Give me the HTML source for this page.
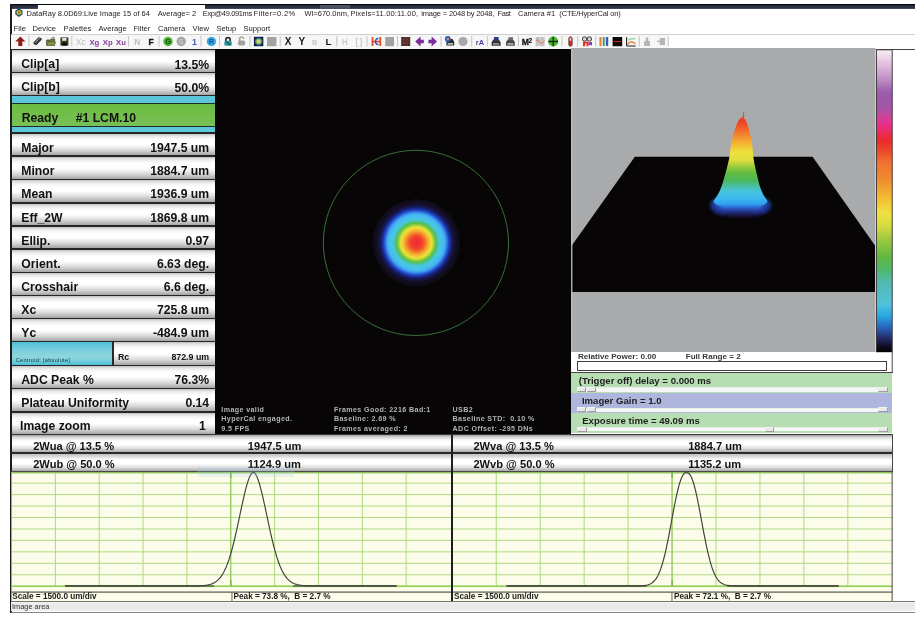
<!DOCTYPE html>
<html>
<head>
<meta charset="utf-8">
<title>DataRay</title>
<style>
html,body{margin:0;padding:0;}
body{width:915px;height:621px;background:#fff;overflow:hidden;position:relative;font-family:"Liberation Sans",sans-serif;color:#111;}
.abs{position:absolute;}
#leftpanel,#profiles,#controls,#imagearea,#hdr,#toolbar,#status{will-change:transform;}
/* window chrome */
#topline{left:10px;top:4px;width:905px;height:1px;background:#05070a;}
.navy{top:5px;height:3.6px;background:linear-gradient(#1e2836,#2c3646 65%,#4a5362);}
#leftborder{left:10.1px;top:4px;width:1.7px;height:609px;background:#1c1c1c;}
.ttl{top:7.6px;font-size:7.51px;line-height:11px;white-space:pre;color:#1e1e1e;}
.menu{top:22.8px;font-size:7.65px;line-height:11px;color:#1e1e1e;}
#menuline{left:11px;top:34px;width:904px;height:1px;background:#cfcfcf;}
/* left panel rows */
.row{left:11.4px;width:203.6px;height:21.7px;background:linear-gradient(to bottom,#c0c0c0 0%,#e6e6e6 10%,#f8f8f8 22%,#ffffff 34%,#ffffff 50%,#f0f0f0 62%,#d2d2d2 80%,#a4a4a4 100%);border-bottom:1.5px solid #262626;font-weight:bold;font-size:12px;}
.row .l{position:absolute;left:9.6px;bottom:2.2px;line-height:14px;white-space:nowrap;}
.row .v{position:absolute;right:6px;bottom:2.2px;line-height:14px;white-space:nowrap;}
.cy{left:11.4px;width:203.6px;background:#5cc6da;border-bottom:1.3px solid #1e2c30;}
/* bars */
.bar{height:18.4px;background:linear-gradient(to bottom,#b4b4b4 0%,#f2f2f2 16%,#ffffff 30%,#ffffff 58%,#d6d6d6 80%,#9a9a9a 100%);border-bottom:1.4px solid #2a2a2a;font-weight:bold;font-size:10.6px;}
.bar span{position:absolute;bottom:1.2px;line-height:13px;white-space:nowrap;}
.ovl{color:#b4b4b4;font-size:7.1px;letter-spacing:0.4px;font-weight:bold;line-height:9.6px;white-space:pre;}
.sl{left:571px;width:321.5px;font-weight:bold;font-size:8.4px;}
.sl span{position:absolute;left:7px;top:2px;line-height:10px;white-space:nowrap;color:#1a1a1a;}
.trk{position:absolute;left:5px;right:4px;bottom:2.2px;height:3.2px;background:#f4f4f4;border-top:1px solid #9a9a9a;}
.th{position:absolute;bottom:1.6px;height:4.4px;background:#ececec;border:0.8px solid #8a8a8a;box-sizing:border-box;}

.scale{font-size:8.2px;font-weight:bold;line-height:9px;white-space:pre;color:#1c1c1c;}
</style>
</head>
<body>
<!-- window frame -->
<div class="abs" id="topline"></div>
<div class="abs navy" style="left:10px;width:28px;"></div>
<div class="abs navy" style="left:205px;width:710px;"></div>
<div class="abs" style="left:320px;top:5.4px;width:30px;height:3.2px;background:#4a5362;"></div>
<div class="abs" id="leftborder"></div>

<div id="hdr">
<!-- title -->
<svg class="abs" style="left:14.1px;top:8.4px" width="9.8" height="9.4" viewBox="0 0 12 12">
<path d="M6 0.4 L10.6 3.4 L10.6 8 L6 11.4 L1.4 8 L1.4 3.4 Z" fill="#27357e"/>
<circle cx="6" cy="5.8" r="3.6" fill="#3f9a3a"/>
<circle cx="6" cy="5.8" r="2.7" fill="#d7d92e"/>
<circle cx="6" cy="5.8" r="1.6" fill="#e8464e"/>
</svg>
<div class="abs ttl" style="left:26.5px">DataRay 8.0D69:Live Image 15 of 64</div><div class="abs ttl" style="left:157.7px">Average= 2</div><div class="abs ttl" style="left:202.8px;letter-spacing:-0.37px">Exp@49.091ms</div><div class="abs ttl" style="left:253.5px;letter-spacing:0.35px">Filter=0.2%</div><div class="abs ttl" style="left:304.6px">Wl=670.0nm,</div><div class="abs ttl" style="left:350.4px;letter-spacing:0.15px">Pixels=11.00:11.00,</div><div class="abs ttl" style="left:421.3px;letter-spacing:-0.17px">image = 2048 by 2048,</div><div class="abs ttl" style="left:497.5px;letter-spacing:-0.4px">Fast</div><div class="abs ttl" style="left:518px">Camera #1</div><div class="abs ttl" style="left:559.3px;letter-spacing:-0.14px">(CTE/HyperCal on)</div>

<!-- menu -->
<div class="abs menu" style="left:13.6px">File</div>
<div class="abs menu" style="left:32.6px">Device</div>
<div class="abs menu" style="left:63.6px">Palettes</div>
<div class="abs menu" style="left:98.4px">Average</div>
<div class="abs menu" style="left:133.4px">Filter</div>
<div class="abs menu" style="left:158px">Camera</div>
<div class="abs menu" style="left:192.6px">View</div>
<div class="abs menu" style="left:216.4px">Setup</div>
<div class="abs menu" style="left:243.4px">Support</div>
<div class="abs" id="menuline"></div>
</div>


<div id="toolbar">
<div class="abs" style="left:11.4px;top:35px;width:657px;height:13.6px;background:#f6f6f6;"></div>
<svg class="abs" style="left:11px;top:35px" width="660" height="14" viewBox="11 35 660 14" font-family="Liberation Sans, sans-serif" font-weight="bold">
<rect x="28.4" y="36" width="1" height="10.4" fill="#c4c4c4"/>
<rect x="71.3" y="36" width="1" height="10.4" fill="#c4c4c4"/>
<rect x="128.0" y="36" width="1" height="10.4" fill="#c4c4c4"/>
<rect x="158.5" y="36" width="1" height="10.4" fill="#c4c4c4"/>
<rect x="200.5" y="36" width="1" height="10.4" fill="#c4c4c4"/>
<rect x="219.0" y="36" width="1" height="10.4" fill="#c4c4c4"/>
<rect x="249.5" y="36" width="1" height="10.4" fill="#c4c4c4"/>
<rect x="279.7" y="36" width="1" height="10.4" fill="#c4c4c4"/>
<rect x="336.3" y="36" width="1" height="10.4" fill="#c4c4c4"/>
<rect x="366.5" y="36" width="1" height="10.4" fill="#c4c4c4"/>
<rect x="397.0" y="36" width="1" height="10.4" fill="#c4c4c4"/>
<rect x="440.5" y="36" width="1" height="10.4" fill="#c4c4c4"/>
<rect x="471.2" y="36" width="1" height="10.4" fill="#c4c4c4"/>
<rect x="486.8" y="36" width="1" height="10.4" fill="#c4c4c4"/>
<rect x="517.9" y="36" width="1" height="10.4" fill="#c4c4c4"/>
<rect x="561.5" y="36" width="1" height="10.4" fill="#c4c4c4"/>
<rect x="577.2" y="36" width="1" height="10.4" fill="#c4c4c4"/>
<rect x="595.2" y="36" width="1" height="10.4" fill="#c4c4c4"/>
<rect x="638.8" y="36" width="1" height="10.4" fill="#c4c4c4"/>
<rect x="667.7" y="36" width="1" height="10.4" fill="#c4c4c4"/>
<path d="M20.3 36.6 L25.4 41.6 L22.3 41.6 L22.3 46 L18.3 46 L18.3 41.6 L15.2 41.6 Z" fill="#8e1a1a"/>
<path d="M33.3 42.6 L38.6 37.3 C39.6 36.8 41.8 38 41.9 39.4 L36.6 44.9 C35.6 45.6 33 44.2 33.3 42.6 Z" fill="#343434"/><path d="M35 42.8 L39.6 38.2" stroke="#bcbcbc" stroke-width="0.9"/>
<path d="M46.6 40 L50.4 40 L51.2 39 L54.6 39 L54.6 45.2 L46.6 45.2 Z" fill="#6d7d3a" stroke="#3a4220" stroke-width="0.7"/><path d="M48 42 L55.6 42 L54.4 45.2 L46.8 45.2 Z" fill="#8a9a4c" stroke="#3a4220" stroke-width="0.5"/><path d="M51.6 38.4 C52.4 37 54 37 54.8 38.2" stroke="#3a4220" fill="none" stroke-width="0.7"/>
<rect x="60.4" y="37.4" width="8" height="8.2" fill="#3e3e1e"/><rect x="62.2" y="38" width="4.2" height="2.8" fill="#e4e4e4"/><rect x="62.2" y="42.6" width="4.4" height="3" fill="#0a0a0a"/>
<text x="75.8" y="44.8" font-size="8.6" fill="#bcbcbc" font-weight="normal">Xc</text>
<text x="89.4" y="44.6" font-size="7.7" fill="#8a3a9e">Xg</text>
<text x="102.8" y="44.6" font-size="7.7" fill="#8a3a9e">Xp</text>
<text x="116" y="44.6" font-size="7.7" fill="#8a3a9e">Xu</text>
<text x="134.2" y="44.8" font-size="8.4" fill="#bcbcbc">N</text>
<text x="148.4" y="44.8" font-size="8.4" fill="#1a1414" stroke="#1a1414" stroke-width="0.35">F</text>
<circle cx="168" cy="41.5" r="4.7" fill="#4cb832"/><text x="168" y="44.3" font-size="7.4" fill="#163a10" text-anchor="middle">G</text>
<circle cx="181.2" cy="41.5" r="4.7" fill="#a6a6a6"/><text x="181.2" y="44.2" font-size="7" fill="#c8c8c8" text-anchor="middle">S</text>
<text x="192" y="44.8" font-size="8.8" fill="#4a5cb8">1</text>
<circle cx="211.4" cy="41.5" r="4.7" fill="#34b0dc"/><text x="211.4" y="44.4" font-size="7.4" fill="#2446b4" text-anchor="middle">R</text>
<path d="M225.8 41.4 L225.8 39.8 C225.8 36.8 230.2 36.8 230.2 39.8 L230.2 41.4" fill="none" stroke="#26302f" stroke-width="1.7"/><rect x="224.3" y="40.8" width="7.4" height="5" rx="1.6" fill="#2a9c9c"/><path d="M226 41.6 L230.4 45" stroke="#1e4a4c" stroke-width="1.1"/>
<path d="M239.6 41 L239.6 39.2 C239.6 36.4 243.6 36.4 243.6 39" fill="none" stroke="#a6a6a6" stroke-width="1.6"/><rect x="237.9" y="40.6" width="7.3" height="5" rx="1.8" fill="#a2a2a2"/>
<defs><radialGradient id="ib"><stop offset="0" stop-color="#f0a0c0"/><stop offset="0.3" stop-color="#e8d860"/><stop offset="0.55" stop-color="#5ab848"/><stop offset="0.8" stop-color="#2848a8"/><stop offset="1" stop-color="#101838"/></radialGradient></defs>
<rect x="253.9" y="36.8" width="9.4" height="9.4" fill="#101838"/><circle cx="258.6" cy="41.5" r="4.6" fill="url(#ib)"/>
<rect x="267" y="37" width="9.4" height="9.2" fill="#a2a2a2"/>
<text x="284.8" y="45.2" font-size="10" fill="#1a1616">X</text>
<text x="298.6" y="45.2" font-size="10" fill="#1a1616">Y</text>
<text x="312" y="44.6" font-size="7.6" fill="#c8c8c8">B</text>
<text x="325.6" y="45.2" font-size="9.8" fill="#1a1616">L</text>
<text x="341.8" y="44.8" font-size="8.4" fill="#cccccc">H</text>
<text x="355.4" y="44.6" font-size="8.2" fill="#c6c6c6">[</text><text x="359.6" y="44.6" font-size="8.2" fill="#c6c6c6">]</text>
<rect x="371.6" y="37" width="1.8" height="9" fill="#e84a28"/><rect x="379.4" y="37" width="1.8" height="9" fill="#e84a28"/><rect x="372" y="40.8" width="9" height="1.6" fill="#e84a28"/><path d="M378.6 38.6 C374.4 37.4 374.4 45.6 378.6 44.4" fill="none" stroke="#2a5ac8" stroke-width="1.5"/>
<rect x="385.2" y="37" width="8.8" height="9.2" fill="#a2a2a2"/>
<rect x="401.2" y="37" width="9" height="9" fill="#4a2a24"/><path d="M404 37 V46 M407 37 V46 M401.2 40 H410.2 M401.2 43 H410.2" stroke="#8a4a40" stroke-width="0.6"/>
<path d="M415.2 41.5 L420.6 36.6 L420.6 39.7 L423.8 39.7 L423.8 43.3 L420.6 43.3 L420.6 46.4 Z" fill="#7a2a9c"/>
<path d="M437 41.5 L431.6 36.6 L431.6 39.7 L428.4 39.7 L428.4 43.3 L431.6 43.3 L431.6 46.4 Z" fill="#7a2a9c"/>
<path d="M446.4 42 L448 39 L452.6 39 L454.2 42 L454.2 45.6 L446.4 45.6 Z" fill="#2a2a2a"/><rect x="447.6" y="43.2" width="5.4" height="1.4" fill="#e0e0e0"/><circle cx="447.8" cy="39" r="2.9" fill="#2a5ac0"/><circle cx="447.8" cy="39" r="1.2" fill="#e89040"/>
<circle cx="463" cy="41.5" r="4.6" fill="#a8a8a8"/>
<text x="475.8" y="44.6" font-size="7.5" fill="#4a3a9a">rA</text>
<path d="M491.6 42 L493.4 39.4 L498.8 39.4 L500.6 42 L500.6 45.8 L491.6 45.8 Z" fill="#343434"/><rect x="494" y="37" width="4.6" height="3.4" fill="#2a3a8a"/><rect x="493" y="43.4" width="6" height="1.2" fill="#bcbcbc"/>
<path d="M506 42 L507.8 39.4 L513 39.4 L514.8 42 L514.8 45.8 L506 45.8 Z" fill="#4a4a4a"/><rect x="508.4" y="37.2" width="4.6" height="3" fill="#6a6a6a"/><rect x="507.4" y="43.4" width="6" height="1.2" fill="#d8d8d8"/>
<text x="521.8" y="45" font-size="8.6" fill="#141414" stroke="#141414" stroke-width="0.3">M</text><text x="528.4" y="42.6" font-size="6.4" fill="#141414" stroke="#141414" stroke-width="0.2">2</text>
<rect x="535.6" y="37" width="9" height="9.2" fill="#c2c2c2"/><path d="M540 37 V46" stroke="#dcdcdc" stroke-width="0.8"/><path d="M536 41 C537.6 39 538.6 40 539.6 42.4 C540.6 44.4 542 43.4 544.4 40.6" fill="none" stroke="#e85a30" stroke-width="0.9"/>
<circle cx="553.2" cy="41.5" r="5" fill="#4cb832"/><path d="M553.2 36.8 V46.2 M548.4 41.5 H558" stroke="#102a0c" stroke-width="1.3"/>
<rect x="568.8" y="36.8" width="3.4" height="9.4" rx="1.7" fill="#d82a22" stroke="#4a2a2a" stroke-width="0.7"/><rect x="569.7" y="37.8" width="1.6" height="3" fill="#f0d0d0"/>
<circle cx="584.6" cy="39" r="2.2" fill="#d8d8d8" stroke="#2a2a2a" stroke-width="0.9"/><circle cx="589.4" cy="39" r="2.2" fill="#d8d8d8" stroke="#2a2a2a" stroke-width="0.9"/><rect x="583" y="41.6" width="5.6" height="4.6" fill="#e8301e"/><rect x="585.2" y="43.4" width="1.4" height="2.8" fill="#f6f6f6"/><path d="M588.6 42.4 L592 41.8 L592 45.4 L588.6 44.8 Z" fill="#8a3ab0"/>
<rect x="599.4" y="37" width="2" height="9" fill="#f07a3a"/><rect x="602.8" y="37" width="2" height="9" fill="#4aa848"/><rect x="606" y="37" width="2.2" height="9" fill="#3a56c8"/><path d="M601.8 38 V45 M605.2 38 V45" stroke="#a8a8a8" stroke-width="0.6"/>
<rect x="612.6" y="37" width="9.6" height="9.2" fill="#0a0808"/><rect x="613.6" y="41" width="7.6" height="1.1" fill="#c8281e"/>
<rect x="626.4" y="37" width="9" height="9" fill="#f4f8f4"/><path d="M626.6 37 V46 H635.6" fill="none" stroke="#1a1a1a" stroke-width="1"/><path d="M627.6 40.4 C630 38 632 39.4 635.4 38.6" fill="none" stroke="#5ab878" stroke-width="0.9"/><path d="M627.6 44.6 C629.6 41 631.4 41 635.4 43.6" fill="none" stroke="#f08050" stroke-width="1.6"/>
<path d="M645.8 37.6 H648.2 V40.6 L650 41.8 V46 H644 V41.8 L645.8 40.6 Z" fill="#b4b4b4"/>
<rect x="659.8" y="38" width="5.2" height="7" fill="#b4b4b4"/><rect x="657" y="40.6" width="3" height="1.4" fill="#b4b4b4"/>
</svg>
</div>
<div id="leftpanel">
<div class="abs" style="left:11.0px;top:48.55px;width:204.6px;height:1.5px;background:#262626;"></div>
<div class="abs row" style="left:11.5px;width:203.8px;top:50.00px;height:21.80px;font-size:12.2px;"><span class="l" style="left:9.8px;bottom:1.53px;line-height:12.2px;">Clip[a]</span><span class="v" style="right:6.2px;bottom:0.53px;line-height:12.2px;">13.5%</span></div>
<div class="abs" style="left:11.0px;top:71.75px;width:204.6px;height:1.5px;background:#262626;"></div>
<div class="abs row" style="left:11.5px;width:203.8px;top:73.20px;height:21.60px;font-size:12.2px;"><span class="l" style="left:9.8px;bottom:1.53px;line-height:12.2px;">Clip[b]</span><span class="v" style="right:6.2px;bottom:0.53px;line-height:12.2px;">50.0%</span></div>
<div class="abs" style="left:11.0px;top:94.75px;width:204.6px;height:1.5px;background:#262626;"></div>
<div class="abs" style="left:11.5px;top:96.2px;width:203.8px;height:6.4px;background:#5cc6da;"></div>
<div class="abs" style="left:11.0px;top:102.55px;width:204.6px;height:1.3px;background:#1e2c24;"></div>
<div class="abs" style="left:11.5px;top:103.8px;width:203.8px;height:21.9px;background:linear-gradient(#6cbb42,#72be4a 50%,#78c058);font-weight:bold;font-size:12.2px;"><span style="position:absolute;left:10.2px;bottom:1.33px;line-height:12.2px;white-space:pre;">Ready</span><span style="position:absolute;left:64.2px;bottom:1.33px;line-height:12.2px;white-space:pre;">#1 LCM.10</span></div>
<div class="abs" style="left:11.0px;top:125.65px;width:204.6px;height:1.3px;background:#1e2c24;"></div>
<div class="abs" style="left:11.5px;top:126.9px;width:203.8px;height:5.5px;background:#5cc6da;"></div>
<div class="abs" style="left:11.0px;top:132.25px;width:204.6px;height:1.5px;background:#262626;"></div>
<div class="abs row" style="left:11.5px;width:203.8px;top:133.70px;height:21.60px;font-size:12.2px;"><span class="l" style="left:9.8px;bottom:1.53px;line-height:12.2px;">Major</span><span class="v" style="right:6.2px;bottom:1.53px;line-height:12.2px;">1947.5 um</span></div>
<div class="abs" style="left:11.0px;top:155.25px;width:204.6px;height:1.5px;background:#262626;"></div>
<div class="abs row" style="left:11.5px;width:203.8px;top:156.70px;height:22.10px;font-size:12.2px;"><span class="l" style="left:9.8px;bottom:1.53px;line-height:12.2px;">Minor</span><span class="v" style="right:6.2px;bottom:1.53px;line-height:12.2px;">1884.7 um</span></div>
<div class="abs" style="left:11.0px;top:178.75px;width:204.6px;height:1.5px;background:#262626;"></div>
<div class="abs row" style="left:11.5px;width:203.8px;top:180.20px;height:22.00px;font-size:12.2px;"><span class="l" style="left:9.8px;bottom:1.53px;line-height:12.2px;">Mean</span><span class="v" style="right:6.2px;bottom:1.53px;line-height:12.2px;">1936.9 um</span></div>
<div class="abs" style="left:11.0px;top:202.15px;width:204.6px;height:1.5px;background:#262626;"></div>
<div class="abs row" style="left:11.5px;width:203.8px;top:203.60px;height:21.80px;font-size:12.2px;"><span class="l" style="left:9.8px;bottom:1.53px;line-height:12.2px;">Eff_2W</span><span class="v" style="right:6.2px;bottom:1.53px;line-height:12.2px;">1869.8 um</span></div>
<div class="abs" style="left:11.0px;top:225.35px;width:204.6px;height:1.5px;background:#262626;"></div>
<div class="abs row" style="left:11.5px;width:203.8px;top:226.80px;height:21.60px;font-size:12.2px;"><span class="l" style="left:9.8px;bottom:1.53px;line-height:12.2px;">Ellip.</span><span class="v" style="right:6.2px;bottom:1.53px;line-height:12.2px;">0.97</span></div>
<div class="abs" style="left:11.0px;top:248.35px;width:204.6px;height:1.5px;background:#262626;"></div>
<div class="abs row" style="left:11.5px;width:203.8px;top:249.80px;height:22.00px;font-size:12.2px;"><span class="l" style="left:9.8px;bottom:1.53px;line-height:12.2px;">Orient.</span><span class="v" style="right:6.2px;bottom:1.53px;line-height:12.2px;">6.63 deg.</span></div>
<div class="abs" style="left:11.0px;top:271.75px;width:204.6px;height:1.5px;background:#262626;"></div>
<div class="abs row" style="left:11.5px;width:203.8px;top:273.20px;height:21.60px;font-size:12.2px;"><span class="l" style="left:9.8px;bottom:1.53px;line-height:12.2px;">Crosshair</span><span class="v" style="right:6.2px;bottom:1.53px;line-height:12.2px;">6.6 deg.</span></div>
<div class="abs" style="left:11.0px;top:294.75px;width:204.6px;height:1.5px;background:#262626;"></div>
<div class="abs row" style="left:11.5px;width:203.8px;top:296.20px;height:21.60px;font-size:12.2px;"><span class="l" style="left:9.8px;bottom:1.53px;line-height:12.2px;">Xc</span><span class="v" style="right:6.2px;bottom:1.53px;line-height:12.2px;">725.8 um</span></div>
<div class="abs" style="left:11.0px;top:317.75px;width:204.6px;height:1.5px;background:#262626;"></div>
<div class="abs row" style="left:11.5px;width:203.8px;top:319.20px;height:21.60px;font-size:12.2px;"><span class="l" style="left:9.8px;bottom:1.53px;line-height:12.2px;">Yc</span><span class="v" style="right:6.2px;bottom:1.53px;line-height:12.2px;">-484.9 um</span></div>
<div class="abs" style="left:11.0px;top:340.75px;width:204.6px;height:1.5px;background:#262626;"></div>
<div class="abs" style="left:11.5px;top:342.2px;width:100.8px;height:22.5px;background:linear-gradient(#4cc0d6,#74ccda 30%,#8ed6de 60%,#84d2dc 75%,#4cc0d8);"><span style="position:absolute;left:4.2px;bottom:1.5px;font-size:5.6px;letter-spacing:0.3px;line-height:6px;color:#123640;white-space:nowrap;">Centroid: [absolute]</span></div>
<div class="abs" style="left:112.2px;top:342.2px;width:1.4px;height:22.5px;background:#2a2a2a;"></div>
<div class="abs row" style="left:113.6px;width:101.7px;top:342.20px;height:22.50px;font-size:8.8px;"><span class="l" style="left:4.4px;bottom:2.85px;line-height:8.8px;">Rc</span><span class="v" style="right:6.2px;bottom:2.85px;line-height:8.8px;">872.9 um</span></div>
<div class="abs" style="left:11.0px;top:364.65px;width:204.6px;height:1.5px;background:#262626;"></div>
<div class="abs row" style="left:11.5px;width:203.8px;top:366.10px;height:21.70px;font-size:12.2px;"><span class="l" style="left:9.8px;bottom:1.93px;line-height:12.2px;">ADC Peak %</span><span class="v" style="right:6.2px;bottom:1.93px;line-height:12.2px;">76.3%</span></div>
<div class="abs" style="left:11.0px;top:387.75px;width:204.6px;height:1.5px;background:#262626;"></div>
<div class="abs row" style="left:11.5px;width:203.8px;top:389.20px;height:22.20px;font-size:12.2px;"><span class="l" style="left:9.8px;bottom:1.93px;line-height:12.2px;">Plateau Uniformity</span><span class="v" style="right:6.2px;bottom:1.93px;line-height:12.2px;">0.14</span></div>
<div class="abs" style="left:11.0px;top:411.35px;width:204.6px;height:1.5px;background:#262626;"></div>
<div class="abs row" style="left:11.5px;width:203.8px;top:412.80px;height:21.10px;font-size:12.2px;"><span class="l" style="left:8.6px;bottom:2.13px;line-height:12.2px;">Image zoom</span><span class="v" style="right:9.5px;bottom:2.13px;line-height:12.2px;">1</span></div>
</div>
<div id="imagearea">
<div class="abs" style="left:215.4px;top:48.6px;width:356px;height:385.6px;background:#070505;"></div>
<svg class="abs" style="left:215px;top:50px" width="356" height="384" viewBox="215 50 356 384">
<defs>
<radialGradient id="beam" cx="416.3" cy="242.7" r="44.5" gradientUnits="userSpaceOnUse">
<stop offset="0" stop-color="#f02838"/>
<stop offset="0.135" stop-color="#f2402c"/>
<stop offset="0.21" stop-color="#f3782a"/>
<stop offset="0.29" stop-color="#f4c030"/>
<stop offset="0.35" stop-color="#e8e43a"/>
<stop offset="0.39" stop-color="#a4d240"/>
<stop offset="0.44" stop-color="#5cbe48"/>
<stop offset="0.485" stop-color="#46c4a0"/>
<stop offset="0.53" stop-color="#48c8e4"/>
<stop offset="0.63" stop-color="#46b8f0"/>
<stop offset="0.675" stop-color="#3a90ee"/>
<stop offset="0.72" stop-color="#2650cc"/>
<stop offset="0.765" stop-color="#1a2c98"/>
<stop offset="0.81" stop-color="#161a58"/>
<stop offset="0.865" stop-color="#14102e"/>
<stop offset="0.945" stop-color="#100c1a"/>
<stop offset="1" stop-color="#070505"/>
</radialGradient>
<filter id="bl" x="-20%" y="-20%" width="140%" height="140%"><feGaussianBlur stdDeviation="0.7"/></filter>
</defs>
<ellipse cx="416.3" cy="242.7" rx="44.5" ry="43.8" fill="url(#beam)" filter="url(#bl)"/>
<circle cx="415.9" cy="242.9" r="92.6" fill="none" stroke="#3d7a3c" stroke-width="0.9"/>
</svg>
<div class="abs ovl" style="left:221.3px;top:405.9px;">Image valid
HyperCal engaged.
9.5 FPS</div>
<div class="abs ovl" style="left:334px;top:405.9px;">Frames Good: 2216 Bad:1
Baseline: 2.69 %
Frames averaged: 2</div>
<div class="abs ovl" style="left:452.6px;top:405.9px;">USB2
Baseline STD:  0.10 %
ADC Offset: -295 DNs</div>
</div>
<div id="threed">
<div class="abs" style="left:571.3px;top:48.1px;width:303.8px;height:303.5px;background:#a9aaac;box-shadow:1px 0 0 #cfcfd1;"></div>
<svg class="abs" style="left:571px;top:48px" width="322" height="326" viewBox="571 48 322 326">
<defs>
<linearGradient id="pk" x1="0" y1="112" x2="0" y2="219" gradientUnits="userSpaceOnUse">
<stop offset="0" stop-color="#f03028"/>
<stop offset="0.10" stop-color="#f04428"/>
<stop offset="0.20" stop-color="#f27c2c"/>
<stop offset="0.29" stop-color="#f4b232"/>
<stop offset="0.37" stop-color="#f0e03c"/>
<stop offset="0.45" stop-color="#dede3c"/>
<stop offset="0.51" stop-color="#9ccc3e"/>
<stop offset="0.57" stop-color="#62bc42"/>
<stop offset="0.64" stop-color="#4cb85c"/>
<stop offset="0.70" stop-color="#48c0b0"/>
<stop offset="0.75" stop-color="#44c4e2"/>
<stop offset="0.81" stop-color="#3cb8ee"/>
<stop offset="0.86" stop-color="#30a0f0"/>
<stop offset="0.888" stop-color="#2c70dc"/>
<stop offset="0.915" stop-color="#2a42a8"/>
<stop offset="0.945" stop-color="#1e2468"/>
<stop offset="0.975" stop-color="#120e2c"/>
<stop offset="1" stop-color="#080606"/>
</linearGradient>
<linearGradient id="edge" x1="0" y1="0" x2="1" y2="0"><stop offset="0" stop-color="#14185a" stop-opacity="0.9"/><stop offset="0.12" stop-color="#18248a" stop-opacity="0.6"/><stop offset="0.24" stop-color="#1c34a8" stop-opacity="0"/><stop offset="0.76" stop-color="#1c34a8" stop-opacity="0"/><stop offset="0.88" stop-color="#18248a" stop-opacity="0.6"/><stop offset="1" stop-color="#14185a" stop-opacity="0.9"/></linearGradient>
<radialGradient id="base" cx="0.5" cy="0.5" r="0.5">
<stop offset="0" stop-color="#2a6ae0"/>
<stop offset="0.5" stop-color="#2238b0"/>
<stop offset="0.78" stop-color="#181a60"/>
<stop offset="1" stop-color="#080606"/>
</radialGradient>
<linearGradient id="cbar" x1="0" y1="50" x2="0" y2="352" gradientUnits="userSpaceOnUse">
<stop offset="0" stop-color="#faeef6"/>
<stop offset="0.055" stop-color="#dcb6da"/>
<stop offset="0.10" stop-color="#bb8cc4"/>
<stop offset="0.14" stop-color="#9c5cac"/>
<stop offset="0.19" stop-color="#a254a4"/>
<stop offset="0.215" stop-color="#c4489c"/>
<stop offset="0.245" stop-color="#ea2e8e"/>
<stop offset="0.275" stop-color="#ea2c54"/>
<stop offset="0.30" stop-color="#ea2a2a"/>
<stop offset="0.335" stop-color="#ec4a2a"/>
<stop offset="0.37" stop-color="#f07030"/>
<stop offset="0.43" stop-color="#f08c30"/>
<stop offset="0.49" stop-color="#f2bc32"/>
<stop offset="0.54" stop-color="#f0e040"/>
<stop offset="0.58" stop-color="#d8dc40"/>
<stop offset="0.625" stop-color="#a0c840"/>
<stop offset="0.69" stop-color="#5ab840"/>
<stop offset="0.73" stop-color="#50b870"/>
<stop offset="0.77" stop-color="#50bab0"/>
<stop offset="0.84" stop-color="#52c2da"/>
<stop offset="0.88" stop-color="#28a8e2"/>
<stop offset="0.92" stop-color="#2862ba"/>
<stop offset="0.955" stop-color="#202a66"/>
<stop offset="0.985" stop-color="#0c0a18"/>
<stop offset="1" stop-color="#050505"/>
</linearGradient>
<filter id="b2" x="-30%" y="-30%" width="160%" height="160%"><feGaussianBlur stdDeviation="1.7"/></filter>
<filter id="b3" x="-10%" y="-10%" width="120%" height="120%"><feGaussianBlur stdDeviation="0.55"/></filter>
</defs>
<!-- floor -->
<path d="M634.8 156.7 L812.6 156.7 L875.0 245.6 L875.0 292 L571.3 292 L571.3 246.2 Z" fill="#070505"/>
<rect x="571.1" y="48.8" width="1.3" height="303" fill="#bdbdc1"/>
<!-- base glow -->
<g filter="url(#b2)"><ellipse cx="740.6" cy="205.8" rx="30.8" ry="12.4" fill="url(#pk)"/><ellipse cx="740.6" cy="205.8" rx="30.8" ry="12.4" fill="url(#edge)"/></g>
<!-- peak -->
<path filter="url(#b3)" fill="url(#pk)" d="M743.7 111.6 L744.0 113.0 L744.0 114.2 L744.1 115.5 L744.3 116.8 L743.4 118.0 L744.9 119.2 L745.7 120.5 L746.4 121.8 L746.9 123.0 L747.4 124.2 L747.8 125.5 L748.2 126.8 L748.6 128.0 L748.9 129.2 L749.2 130.5 L749.5 131.8 L749.8 133.0 L750.1 134.2 L750.4 135.5 L750.7 136.8 L751.0 138.0 L751.3 139.2 L751.5 140.5 L751.8 141.8 L752.0 143.0 L752.1 144.2 L752.3 145.5 L752.4 146.8 L752.6 148.0 L752.7 149.2 L752.8 150.5 L752.9 151.8 L753.0 153.0 L753.1 154.2 L753.2 155.5 L753.3 156.8 L753.5 158.0 L753.7 159.2 L753.9 160.5 L754.1 161.8 L754.3 163.0 L754.6 164.2 L754.8 165.5 L755.1 166.8 L755.3 168.0 L755.6 169.2 L755.9 170.5 L756.2 171.8 L756.5 173.0 L756.8 174.2 L757.1 175.5 L757.4 176.8 L757.7 178.0 L758.0 179.2 L758.3 180.5 L758.6 181.8 L758.9 183.0 L759.3 184.2 L759.6 185.5 L760.0 186.8 L760.4 188.0 L760.9 189.2 L761.4 190.5 L761.9 191.8 L762.5 193.0 L763.1 194.2 L763.7 195.5 L764.5 196.8 L765.4 198.0 L766.2 199.2 L767.1 200.5 C768.6 204.5 757.4 209 740.4 209 C723.4 209 712.2 204.5 713.7 200.5 L713.7 200.5 L714.7 199.2 L715.6 198.0 L716.5 196.8 L717.3 195.5 L718.0 194.2 L718.7 193.0 L719.3 191.8 L719.9 190.5 L720.4 189.2 L720.9 188.0 L721.4 186.8 L721.8 185.5 L722.3 184.2 L722.7 183.0 L723.0 181.8 L723.4 180.5 L723.8 179.2 L724.1 178.0 L724.5 176.8 L724.8 175.5 L725.2 174.2 L725.5 173.0 L725.9 171.8 L726.2 170.5 L726.6 169.2 L726.9 168.0 L727.2 166.8 L727.5 165.5 L727.8 164.2 L728.1 163.0 L728.4 161.8 L728.7 160.5 L729.0 159.2 L729.2 158.0 L729.4 156.8 L729.6 155.5 L729.7 154.2 L729.9 153.0 L730.0 151.8 L730.2 150.5 L730.4 149.2 L730.6 148.0 L730.7 146.8 L730.9 145.5 L731.1 144.2 L731.4 143.0 L731.6 141.8 L731.9 140.5 L732.2 139.2 L732.6 138.0 L732.9 136.8 L733.2 135.5 L733.6 134.2 L734.0 133.0 L734.3 131.8 L734.7 130.5 L735.0 129.2 L735.4 128.0 L735.9 126.8 L736.3 125.5 L736.8 124.2 L737.3 123.0 L737.9 121.8 L738.6 120.5 L739.5 119.2 L741.1 118.0 L742.8 116.8 L743.1 115.5 L743.2 114.2 L743.3 113.0 Z"/>
<!-- colorbar -->
<rect x="876.2" y="49.8" width="16.2" height="302.4" fill="url(#cbar)"/>
<rect x="876.0" y="49.8" width="0.9" height="302.4" fill="#3a3436"/>
<rect x="891.7" y="49.8" width="1" height="322.4" fill="#4a4446"/>
<rect x="876.0" y="49.4" width="16.5" height="0.9" fill="#3a3436"/>
</svg>
<div class="abs" style="left:875.6px;top:48.9px;width:39.4px;height:1.1px;background:#4a4444;"></div>
</div>
<div id="controls">
<div class="abs" style="left:571.4px;top:371.5px;width:321.4px;height:1.2px;background:#4a4442;"></div>
<div class="abs" style="left:577.9px;top:353.04px;font-size:8.1px;font-weight:bold;line-height:8.1px;color:#3a3638;white-space:pre;">Relative Power: 0.00</div>
<div class="abs" style="left:685.7px;top:353.04px;font-size:8.1px;font-weight:bold;line-height:8.1px;color:#3a3638;white-space:pre;">Full Range = 2</div>
<div class="abs" style="left:576.6px;top:361.4px;width:310.6px;height:9.6px;box-sizing:border-box;border:1.3px solid #463e3e;background:#fff;"></div>
<div class="abs" style="left:571.2px;top:372.6px;width:321.3px;height:20.3px;background:#b7ddb3;"></div>
<div class="abs" style="left:578.7px;top:375.67px;font-size:9.6px;font-weight:bold;line-height:9.6px;color:#1e1e1e;white-space:pre;">(Trigger off) delay = 0.000 ms</div>
<div class="abs" style="left:577px;top:387.4px;width:311px;height:4.2px;background:linear-gradient(#dfe6df,#f6f8f6 35%,#f4f6f4);"></div>
<div class="abs" style="left:577px;top:387.1px;width:9.4px;height:4.8px;box-sizing:border-box;background:#e9e9e9;border:0.8px solid #9c9c9c;border-top-color:#f4f4f4;border-left-color:#f0f0f0;"></div>
<div class="abs" style="left:586.6px;top:387.1px;width:9.4px;height:4.8px;box-sizing:border-box;background:#e9e9e9;border:0.8px solid #9c9c9c;border-top-color:#f4f4f4;border-left-color:#f0f0f0;"></div>
<div class="abs" style="left:878.2px;top:387.1px;width:9.7px;height:4.8px;box-sizing:border-box;background:#e9e9e9;border:0.8px solid #9c9c9c;border-top-color:#f4f4f4;border-left-color:#f0f0f0;"></div>
<div class="abs" style="left:571.2px;top:392.9px;width:321.3px;height:20.1px;background:#afb6de;"></div>
<div class="abs" style="left:581.9px;top:395.97px;font-size:9.6px;font-weight:bold;line-height:9.6px;color:#1e1e1e;white-space:pre;">Imager Gain = 1.0</div>
<div class="abs" style="left:577px;top:407.5px;width:311px;height:4.2px;background:linear-gradient(#dfe6df,#f6f8f6 35%,#f4f6f4);"></div>
<div class="abs" style="left:577px;top:407.2px;width:9.4px;height:4.8px;box-sizing:border-box;background:#e9e9e9;border:0.8px solid #9c9c9c;border-top-color:#f4f4f4;border-left-color:#f0f0f0;"></div>
<div class="abs" style="left:586.6px;top:407.2px;width:9.4px;height:4.8px;box-sizing:border-box;background:#e9e9e9;border:0.8px solid #9c9c9c;border-top-color:#f4f4f4;border-left-color:#f0f0f0;"></div>
<div class="abs" style="left:878.2px;top:407.2px;width:9.7px;height:4.8px;box-sizing:border-box;background:#e9e9e9;border:0.8px solid #9c9c9c;border-top-color:#f4f4f4;border-left-color:#f0f0f0;"></div>
<div class="abs" style="left:571.2px;top:413.0px;width:321.3px;height:19.7px;background:#b7ddb3;"></div>
<div class="abs" style="left:582.2px;top:416.27px;font-size:9.6px;font-weight:bold;line-height:9.6px;color:#1e1e1e;white-space:pre;">Exposure time = 49.09 ms</div>
<div class="abs" style="left:577px;top:427.2px;width:311px;height:4.2px;background:linear-gradient(#dfe6df,#f6f8f6 35%,#f4f6f4);"></div>
<div class="abs" style="left:577px;top:426.9px;width:9.6px;height:4.8px;box-sizing:border-box;background:#e9e9e9;border:0.8px solid #9c9c9c;border-top-color:#f4f4f4;border-left-color:#f0f0f0;"></div>
<div class="abs" style="left:764.6px;top:426.9px;width:9.3px;height:4.8px;box-sizing:border-box;background:#e9e9e9;border:0.8px solid #9c9c9c;border-top-color:#f4f4f4;border-left-color:#f0f0f0;"></div>
<div class="abs" style="left:878.2px;top:426.9px;width:9.7px;height:4.8px;box-sizing:border-box;background:#e9e9e9;border:0.8px solid #9c9c9c;border-top-color:#f4f4f4;border-left-color:#f0f0f0;"></div>
</div>
<div id="profiles">
<div class="abs" style="left:11px;top:433.85px;width:881.6px;height:1.5px;background:#383838;"></div>
<div class="abs bar" style="left:11.5px;top:435.30px;width:440px;height:17.10px;font-size:11.1px;border-bottom:none;background:linear-gradient(to bottom,#9c9c9c 0%,#d4d4d4 12%,#f2f2f2 27%,#ffffff 38%,#ffffff 56%,#dcdcdc 80%,#a8a8a8 100%);"><span style="left:21.7px;bottom:0.40px;line-height:11.1px;">2Wua @ 13.5 %</span><span style="left:236.3px;bottom:0.40px;line-height:11.1px;">1947.5 um</span></div>
<div class="abs bar" style="left:452.6px;top:435.30px;width:439.8px;height:17.10px;font-size:11.1px;border-bottom:none;background:linear-gradient(to bottom,#9c9c9c 0%,#d4d4d4 12%,#f2f2f2 27%,#ffffff 38%,#ffffff 56%,#dcdcdc 80%,#a8a8a8 100%);"><span style="left:20.8px;bottom:0.40px;line-height:11.1px;">2Wva @ 13.5 %</span><span style="left:235.6px;bottom:0.40px;line-height:11.1px;">1884.7 um</span></div>
<div class="abs" style="left:11px;top:452.40px;width:881.6px;height:1.4px;background:#2a2a2a;"></div>
<div class="abs bar" style="left:11.5px;top:453.80px;width:440px;height:17.10px;font-size:11.1px;border-bottom:none;background:linear-gradient(to bottom,#c0c0c0 0%,#d4d4d4 12%,#f2f2f2 27%,#ffffff 38%,#ffffff 56%,#dcdcdc 80%,#a8a8a8 100%);"><span style="left:21.7px;bottom:0.40px;line-height:11.1px;">2Wub @ 50.0 %</span><span style="left:236.3px;bottom:0.40px;line-height:11.1px;">1124.9 um</span></div>
<div class="abs bar" style="left:452.6px;top:453.80px;width:439.8px;height:17.10px;font-size:11.1px;border-bottom:none;background:linear-gradient(to bottom,#c0c0c0 0%,#d4d4d4 12%,#f2f2f2 27%,#ffffff 38%,#ffffff 56%,#dcdcdc 80%,#a8a8a8 100%);"><span style="left:20.8px;bottom:0.40px;line-height:11.1px;">2Wvb @ 50.0 %</span><span style="left:235.6px;bottom:0.40px;line-height:11.1px;">1135.2 um</span></div>
<div class="abs" style="left:11px;top:471.00px;width:881.6px;height:1.2px;background:#4a4a40;"></div>
<svg class="abs" style="left:11px;top:471px" width="882" height="131" viewBox="11 471 882 131">
<rect x="11.4" y="472" width="881" height="129" fill="#fbfcea"/>
<line x1="11.4" y1="483.15" x2="452" y2="483.15" stroke="#a8d676" stroke-width="0.9"/>
<line x1="11.4" y1="494.60" x2="452" y2="494.60" stroke="#a8d676" stroke-width="0.9"/>
<line x1="11.4" y1="506.05" x2="452" y2="506.05" stroke="#a8d676" stroke-width="0.9"/>
<line x1="11.4" y1="517.50" x2="452" y2="517.50" stroke="#a8d676" stroke-width="0.9"/>
<line x1="11.4" y1="528.95" x2="452" y2="528.95" stroke="#a8d676" stroke-width="0.9"/>
<line x1="11.4" y1="540.40" x2="452" y2="540.40" stroke="#a8d676" stroke-width="0.9"/>
<line x1="11.4" y1="551.85" x2="452" y2="551.85" stroke="#a8d676" stroke-width="0.9"/>
<line x1="11.4" y1="563.30" x2="452" y2="563.30" stroke="#a8d676" stroke-width="0.9"/>
<line x1="11.4" y1="574.75" x2="452" y2="574.75" stroke="#a8d676" stroke-width="0.9"/>
<line x1="452.6" y1="483.15" x2="892.3" y2="483.15" stroke="#a8d676" stroke-width="0.9"/>
<line x1="452.6" y1="494.60" x2="892.3" y2="494.60" stroke="#a8d676" stroke-width="0.9"/>
<line x1="452.6" y1="506.05" x2="892.3" y2="506.05" stroke="#a8d676" stroke-width="0.9"/>
<line x1="452.6" y1="517.50" x2="892.3" y2="517.50" stroke="#a8d676" stroke-width="0.9"/>
<line x1="452.6" y1="528.95" x2="892.3" y2="528.95" stroke="#a8d676" stroke-width="0.9"/>
<line x1="452.6" y1="540.40" x2="892.3" y2="540.40" stroke="#a8d676" stroke-width="0.9"/>
<line x1="452.6" y1="551.85" x2="892.3" y2="551.85" stroke="#a8d676" stroke-width="0.9"/>
<line x1="452.6" y1="563.30" x2="892.3" y2="563.30" stroke="#a8d676" stroke-width="0.9"/>
<line x1="452.6" y1="574.75" x2="892.3" y2="574.75" stroke="#a8d676" stroke-width="0.9"/>
<line x1="55.35" y1="472" x2="55.35" y2="586" stroke="#a8d676" stroke-width="0.9"/>
<line x1="496.25" y1="472" x2="496.25" y2="586" stroke="#a8d676" stroke-width="0.9"/>
<line x1="99.20" y1="472" x2="99.20" y2="586" stroke="#a8d676" stroke-width="0.9"/>
<line x1="540.20" y1="472" x2="540.20" y2="586" stroke="#a8d676" stroke-width="0.9"/>
<line x1="143.05" y1="472" x2="143.05" y2="586" stroke="#a8d676" stroke-width="0.9"/>
<line x1="584.15" y1="472" x2="584.15" y2="586" stroke="#a8d676" stroke-width="0.9"/>
<line x1="186.90" y1="472" x2="186.90" y2="586" stroke="#a8d676" stroke-width="0.9"/>
<line x1="628.10" y1="472" x2="628.10" y2="586" stroke="#a8d676" stroke-width="0.9"/>
<line x1="230.75" y1="472" x2="230.75" y2="586" stroke="#a8d676" stroke-width="0.9"/>
<line x1="672.05" y1="472" x2="672.05" y2="586" stroke="#a8d676" stroke-width="0.9"/>
<line x1="274.60" y1="472" x2="274.60" y2="586" stroke="#a8d676" stroke-width="0.9"/>
<line x1="716.00" y1="472" x2="716.00" y2="586" stroke="#a8d676" stroke-width="0.9"/>
<line x1="318.45" y1="472" x2="318.45" y2="586" stroke="#a8d676" stroke-width="0.9"/>
<line x1="759.95" y1="472" x2="759.95" y2="586" stroke="#a8d676" stroke-width="0.9"/>
<line x1="362.30" y1="472" x2="362.30" y2="586" stroke="#a8d676" stroke-width="0.9"/>
<line x1="803.90" y1="472" x2="803.90" y2="586" stroke="#a8d676" stroke-width="0.9"/>
<line x1="406.15" y1="472" x2="406.15" y2="586" stroke="#a8d676" stroke-width="0.9"/>
<line x1="847.85" y1="472" x2="847.85" y2="586" stroke="#a8d676" stroke-width="0.9"/>
<rect x="11.4" y="472.1" width="881" height="1.3" fill="#86bc54"/>
<rect x="11.4" y="585.3" width="881" height="1.8" fill="#98d25c"/>
<rect x="230.25" y="472" width="1" height="114" fill="#8cc85a"/><rect x="230.2" y="472" width="1.2" height="6" fill="#6cb040"/><rect x="230.2" y="580" width="1.2" height="6" fill="#6cb040"/>
<rect x="671.55" y="472" width="1" height="114" fill="#8cc85a"/><rect x="671.5" y="472" width="1.2" height="6" fill="#6cb040"/><rect x="671.5" y="580" width="1.2" height="6" fill="#6cb040"/>
<rect x="65" y="585.2" width="149.0" height="1.7" fill="#5d7848"/>
<rect x="293" y="585.2" width="104.0" height="1.7" fill="#5d7848"/>
<rect x="506.5" y="585.2" width="140.5" height="1.7" fill="#5d7848"/>
<rect x="727" y="585.2" width="111.7" height="1.7" fill="#5d7848"/>
<path d="M65.0 585.9 L65.8 585.9 L66.6 585.9 L67.4 585.9 L68.2 585.9 L69.0 585.9 L69.8 585.9 L70.6 585.9 L71.4 585.9 L72.2 585.9 L73.0 585.9 L73.8 585.9 L74.6 585.9 L75.4 585.9 L76.2 585.9 L77.0 585.9 L77.8 585.9 L78.6 585.9 L79.4 585.9 L80.2 585.9 L81.0 585.9 L81.8 585.9 L82.6 585.9 L83.4 585.9 L84.2 585.9 L85.0 585.9 L85.8 585.9 L86.6 585.9 L87.4 585.9 L88.2 585.9 L89.0 585.9 L89.8 585.9 L90.6 585.9 L91.4 585.9 L92.2 585.9 L93.0 585.9 L93.8 585.9 L94.6 585.9 L95.4 585.9 L96.2 585.9 L97.0 585.9 L97.8 585.9 L98.6 585.9 L99.4 585.9 L100.2 585.9 L101.0 585.9 L101.8 585.9 L102.6 585.9 L103.4 585.9 L104.2 585.9 L105.0 585.9 L105.8 585.9 L106.6 585.9 L107.4 585.9 L108.2 585.9 L109.0 585.9 L109.8 585.9 L110.6 585.9 L111.4 585.9 L112.2 585.9 L113.0 585.9 L113.8 585.9 L114.6 585.9 L115.4 585.9 L116.2 585.9 L117.0 585.9 L117.8 585.9 L118.6 585.9 L119.4 585.9 L120.2 585.9 L121.0 585.9 L121.8 585.9 L122.6 585.9 L123.4 585.9 L124.2 585.9 L125.0 585.9 L125.8 585.9 L126.6 585.9 L127.4 585.9 L128.2 585.9 L129.0 585.9 L129.8 585.9 L130.6 585.9 L131.4 585.9 L132.2 585.9 L133.0 585.9 L133.8 585.9 L134.6 585.9 L135.4 585.9 L136.2 585.9 L137.0 585.9 L137.8 585.9 L138.6 585.9 L139.4 585.9 L140.2 585.9 L141.0 585.9 L141.8 585.9 L142.6 585.9 L143.4 585.9 L144.2 585.9 L145.0 585.9 L145.8 585.9 L146.6 585.9 L147.4 585.9 L148.2 585.9 L149.0 585.9 L149.8 585.9 L150.6 585.9 L151.4 585.9 L152.2 585.9 L153.0 585.9 L153.8 585.9 L154.6 585.9 L155.4 585.9 L156.2 585.9 L157.0 585.9 L157.8 585.9 L158.6 585.9 L159.4 585.9 L160.2 585.9 L161.0 585.9 L161.8 585.9 L162.6 585.9 L163.4 585.9 L164.2 585.9 L165.0 585.9 L165.8 585.9 L166.6 585.9 L167.4 585.9 L168.2 585.9 L169.0 585.9 L169.8 585.9 L170.6 585.9 L171.4 585.9 L172.2 585.9 L173.0 585.9 L173.8 585.9 L174.6 585.9 L175.4 585.9 L176.2 585.9 L177.0 585.9 L177.8 585.9 L178.6 585.9 L179.4 585.9 L180.2 585.9 L181.0 585.9 L181.8 585.9 L182.6 585.9 L183.4 585.9 L184.2 585.9 L185.0 585.9 L185.8 585.9 L186.6 585.9 L187.4 585.9 L188.2 585.9 L189.0 585.9 L189.8 585.9 L190.6 585.9 L191.4 585.9 L192.2 585.9 L193.0 585.9 L193.8 585.9 L194.6 585.9 L195.4 585.8 L196.2 585.8 L197.0 585.8 L197.8 585.8 L198.6 585.8 L199.4 585.7 L200.2 585.7 L201.0 585.7 L201.8 585.6 L202.6 585.6 L203.4 585.5 L204.2 585.5 L205.0 585.4 L205.8 585.3 L206.6 585.2 L207.4 585.0 L208.2 584.9 L209.0 584.7 L209.8 584.5 L210.6 584.3 L211.4 584.0 L212.2 583.7 L213.0 583.4 L213.8 583.0 L214.6 582.5 L215.4 582.1 L216.2 581.5 L217.0 580.9 L217.8 580.2 L218.6 579.4 L219.4 578.6 L220.2 577.6 L221.0 576.6 L221.8 575.4 L222.6 574.2 L223.4 572.8 L224.2 571.3 L225.0 569.6 L225.8 567.9 L226.6 566.0 L227.4 563.9 L228.2 561.7 L229.0 559.4 L229.8 556.9 L230.6 554.3 L231.4 551.5 L232.2 548.6 L233.0 545.5 L233.8 542.3 L234.6 539.0 L235.4 535.6 L236.2 532.1 L237.0 528.5 L237.8 524.8 L238.6 521.1 L239.4 517.3 L240.2 513.5 L241.0 509.7 L241.8 506.0 L242.6 502.3 L243.4 498.8 L244.2 495.3 L245.0 491.9 L245.8 488.8 L246.6 485.8 L247.4 483.1 L248.2 480.6 L249.0 478.4 L249.8 476.5 L250.6 474.9 L251.4 473.7 L252.2 472.9 L253.0 472.4 L253.8 472.5 L254.6 473.0 L255.4 474.0 L256.2 475.3 L257.0 476.9 L257.8 478.9 L258.6 481.2 L259.4 483.7 L260.2 486.5 L261.0 489.6 L261.8 492.8 L262.6 496.1 L263.4 499.6 L264.2 503.3 L265.0 506.9 L265.8 510.7 L266.6 514.5 L267.4 518.2 L268.2 522.0 L269.0 525.7 L269.8 529.4 L270.6 533.0 L271.4 536.5 L272.2 539.9 L273.0 543.2 L273.8 546.3 L274.6 549.3 L275.4 552.2 L276.2 555.0 L277.0 557.6 L277.8 560.0 L278.6 562.3 L279.4 564.5 L280.2 566.5 L281.0 568.3 L281.8 570.1 L282.6 571.7 L283.4 573.1 L284.2 574.5 L285.0 575.7 L285.8 576.8 L286.6 577.9 L287.4 578.8 L288.2 579.6 L289.0 580.4 L289.8 581.0 L290.6 581.6 L291.4 582.2 L292.2 582.7 L293.0 583.1 L293.8 583.5 L294.6 583.8 L295.4 584.1 L296.2 584.3 L297.0 584.6 L297.8 584.8 L298.6 584.9 L299.4 585.1 L300.2 585.2 L301.0 585.3 L301.8 585.4 L302.6 585.5 L303.4 585.5 L304.2 585.6 L305.0 585.6 L305.8 585.7 L306.6 585.7 L307.4 585.8 L308.2 585.8 L309.0 585.8 L309.8 585.8 L310.6 585.8 L311.4 585.8 L312.2 585.9 L313.0 585.9 L313.8 585.9 L314.6 585.9 L315.4 585.9 L316.2 585.9 L317.0 585.9 L317.8 585.9 L318.6 585.9 L319.4 585.9 L320.2 585.9 L321.0 585.9 L321.8 585.9 L322.6 585.9 L323.4 585.9 L324.2 585.9 L325.0 585.9 L325.8 585.9 L326.6 585.9 L327.4 585.9 L328.2 585.9 L329.0 585.9 L329.8 585.9 L330.6 585.9 L331.4 585.9 L332.2 585.9 L333.0 585.9 L333.8 585.9 L334.6 585.9 L335.4 585.9 L336.2 585.9 L337.0 585.9 L337.8 585.9 L338.6 585.9 L339.4 585.9 L340.2 585.9 L341.0 585.9 L341.8 585.9 L342.6 585.9 L343.4 585.9 L344.2 585.9 L345.0 585.9 L345.8 585.9 L346.6 585.9 L347.4 585.9 L348.2 585.9 L349.0 585.9 L349.8 585.9 L350.6 585.9 L351.4 585.9 L352.2 585.9 L353.0 585.9 L353.8 585.9 L354.6 585.9 L355.4 585.9 L356.2 585.9 L357.0 585.9 L357.8 585.9 L358.6 585.9 L359.4 585.9 L360.2 585.9 L361.0 585.9 L361.8 585.9 L362.6 585.9 L363.4 585.9 L364.2 585.9 L365.0 585.9 L365.8 585.9 L366.6 585.9 L367.4 585.9 L368.2 585.9 L369.0 585.9 L369.8 585.9 L370.6 585.9 L371.4 585.9 L372.2 585.9 L373.0 585.9 L373.8 585.9 L374.6 585.9 L375.4 585.9 L376.2 585.9 L377.0 585.9 L377.8 585.9 L378.6 585.9 L379.4 585.9 L380.2 585.9 L381.0 585.9 L381.8 585.9 L382.6 585.9 L383.4 585.9 L384.2 585.9 L385.0 585.9 L385.8 585.9 L386.6 585.9 L387.4 585.9 L388.2 585.9 L389.0 585.9 L389.8 585.9 L390.6 585.9 L391.4 585.9 L392.2 585.9 L393.0 585.9 L393.8 585.9 L394.6 585.9 L395.4 585.9 L396.2 585.9" fill="none" stroke="#403e3a" stroke-width="1.15"/>
<path d="M506.5 585.9 L507.3 585.9 L508.1 585.9 L508.9 585.9 L509.7 585.9 L510.5 585.9 L511.3 585.9 L512.1 585.9 L512.9 585.9 L513.7 585.9 L514.5 585.9 L515.3 585.9 L516.1 585.9 L516.9 585.9 L517.7 585.9 L518.5 585.9 L519.3 585.9 L520.1 585.9 L520.9 585.9 L521.7 585.9 L522.5 585.9 L523.3 585.9 L524.1 585.9 L524.9 585.9 L525.7 585.9 L526.5 585.9 L527.3 585.9 L528.1 585.9 L528.9 585.9 L529.7 585.9 L530.5 585.9 L531.3 585.9 L532.1 585.9 L532.9 585.9 L533.7 585.9 L534.5 585.9 L535.3 585.9 L536.1 585.9 L536.9 585.9 L537.7 585.9 L538.5 585.9 L539.3 585.9 L540.1 585.9 L540.9 585.9 L541.7 585.9 L542.5 585.9 L543.3 585.9 L544.1 585.9 L544.9 585.9 L545.7 585.9 L546.5 585.9 L547.3 585.9 L548.1 585.9 L548.9 585.9 L549.7 585.9 L550.5 585.9 L551.3 585.9 L552.1 585.9 L552.9 585.9 L553.7 585.9 L554.5 585.9 L555.3 585.9 L556.1 585.9 L556.9 585.9 L557.7 585.9 L558.5 585.9 L559.3 585.9 L560.1 585.9 L560.9 585.9 L561.7 585.9 L562.5 585.9 L563.3 585.9 L564.1 585.9 L564.9 585.9 L565.7 585.9 L566.5 585.9 L567.3 585.9 L568.1 585.9 L568.9 585.9 L569.7 585.9 L570.5 585.9 L571.3 585.9 L572.1 585.9 L572.9 585.9 L573.7 585.9 L574.5 585.9 L575.3 585.9 L576.1 585.9 L576.9 585.9 L577.7 585.9 L578.5 585.9 L579.3 585.9 L580.1 585.9 L580.9 585.9 L581.7 585.9 L582.5 585.9 L583.3 585.9 L584.1 585.9 L584.9 585.9 L585.7 585.9 L586.5 585.9 L587.3 585.9 L588.1 585.9 L588.9 585.9 L589.7 585.9 L590.5 585.9 L591.3 585.9 L592.1 585.9 L592.9 585.9 L593.7 585.9 L594.5 585.9 L595.3 585.9 L596.1 585.9 L596.9 585.9 L597.7 585.9 L598.5 585.9 L599.3 585.9 L600.1 585.9 L600.9 585.9 L601.7 585.9 L602.5 585.9 L603.3 585.9 L604.1 585.9 L604.9 585.9 L605.7 585.9 L606.5 585.9 L607.3 585.9 L608.1 585.9 L608.9 585.9 L609.7 585.9 L610.5 585.9 L611.3 585.9 L612.1 585.9 L612.9 585.9 L613.7 585.9 L614.5 585.9 L615.3 585.9 L616.1 585.9 L616.9 585.9 L617.7 585.9 L618.5 585.9 L619.3 585.9 L620.1 585.9 L620.9 585.9 L621.7 585.9 L622.5 585.9 L623.3 585.9 L624.1 585.9 L624.9 585.9 L625.7 585.9 L626.5 585.9 L627.3 585.9 L628.1 585.9 L628.9 585.9 L629.7 585.9 L630.5 585.9 L631.3 585.9 L632.1 585.9 L632.9 585.9 L633.7 585.9 L634.5 585.9 L635.3 585.9 L636.1 585.9 L636.9 585.9 L637.7 585.9 L638.5 585.8 L639.3 585.8 L640.1 585.8 L640.9 585.8 L641.7 585.7 L642.5 585.7 L643.3 585.6 L644.1 585.6 L644.9 585.5 L645.7 585.3 L646.5 585.2 L647.3 585.0 L648.1 584.8 L648.9 584.5 L649.7 584.2 L650.5 583.8 L651.3 583.4 L652.1 582.9 L652.9 582.2 L653.7 581.5 L654.5 580.7 L655.3 579.7 L656.1 578.6 L656.9 577.4 L657.7 575.9 L658.5 574.3 L659.3 572.6 L660.1 570.6 L660.9 568.4 L661.7 566.0 L662.5 563.4 L663.3 560.6 L664.1 557.5 L664.9 554.3 L665.7 550.8 L666.5 547.2 L667.3 543.4 L668.1 539.4 L668.9 535.3 L669.7 531.1 L670.5 526.9 L671.3 522.5 L672.1 518.2 L672.9 513.9 L673.7 509.6 L674.5 505.5 L675.3 501.5 L676.1 497.6 L676.9 493.9 L677.7 490.5 L678.5 487.3 L679.3 484.4 L680.1 481.8 L680.9 479.5 L681.7 477.6 L682.5 476.0 L683.3 474.7 L684.1 473.7 L684.9 473.1 L685.7 472.7 L686.5 472.6 L687.3 472.7 L688.1 473.0 L688.9 473.5 L689.7 474.4 L690.5 475.6 L691.3 477.1 L692.1 479.0 L692.9 481.2 L693.7 483.7 L694.5 486.5 L695.3 489.7 L696.1 493.0 L696.9 496.6 L697.7 500.5 L698.5 504.5 L699.3 508.6 L700.1 512.8 L700.9 517.1 L701.7 521.5 L702.5 525.8 L703.3 530.1 L704.1 534.3 L704.9 538.4 L705.7 542.4 L706.5 546.3 L707.3 549.9 L708.1 553.4 L708.9 556.7 L709.7 559.8 L710.5 562.7 L711.3 565.4 L712.1 567.8 L712.9 570.0 L713.7 572.1 L714.5 573.9 L715.3 575.6 L716.1 577.0 L716.9 578.3 L717.7 579.5 L718.5 580.5 L719.3 581.3 L720.1 582.1 L720.9 582.7 L721.7 583.3 L722.5 583.7 L723.3 584.1 L724.1 584.5 L724.9 584.7 L725.7 585.0 L726.5 585.2 L727.3 585.3 L728.1 585.4 L728.9 585.5 L729.7 585.6 L730.5 585.7 L731.3 585.7 L732.1 585.8 L732.9 585.8 L733.7 585.8 L734.5 585.8 L735.3 585.9 L736.1 585.9 L736.9 585.9 L737.7 585.9 L738.5 585.9 L739.3 585.9 L740.1 585.9 L740.9 585.9 L741.7 585.9 L742.5 585.9 L743.3 585.9 L744.1 585.9 L744.9 585.9 L745.7 585.9 L746.5 585.9 L747.3 585.9 L748.1 585.9 L748.9 585.9 L749.7 585.9 L750.5 585.9 L751.3 585.9 L752.1 585.9 L752.9 585.9 L753.7 585.9 L754.5 585.9 L755.3 585.9 L756.1 585.9 L756.9 585.9 L757.7 585.9 L758.5 585.9 L759.3 585.9 L760.1 585.9 L760.9 585.9 L761.7 585.9 L762.5 585.9 L763.3 585.9 L764.1 585.9 L764.9 585.9 L765.7 585.9 L766.5 585.9 L767.3 585.9 L768.1 585.9 L768.9 585.9 L769.7 585.9 L770.5 585.9 L771.3 585.9 L772.1 585.9 L772.9 585.9 L773.7 585.9 L774.5 585.9 L775.3 585.9 L776.1 585.9 L776.9 585.9 L777.7 585.9 L778.5 585.9 L779.3 585.9 L780.1 585.9 L780.9 585.9 L781.7 585.9 L782.5 585.9 L783.3 585.9 L784.1 585.9 L784.9 585.9 L785.7 585.9 L786.5 585.9 L787.3 585.9 L788.1 585.9 L788.9 585.9 L789.7 585.9 L790.5 585.9 L791.3 585.9 L792.1 585.9 L792.9 585.9 L793.7 585.9 L794.5 585.9 L795.3 585.9 L796.1 585.9 L796.9 585.9 L797.7 585.9 L798.5 585.9 L799.3 585.9 L800.1 585.9 L800.9 585.9 L801.7 585.9 L802.5 585.9 L803.3 585.9 L804.1 585.9 L804.9 585.9 L805.7 585.9 L806.5 585.9 L807.3 585.9 L808.1 585.9 L808.9 585.9 L809.7 585.9 L810.5 585.9 L811.3 585.9 L812.1 585.9 L812.9 585.9 L813.7 585.9 L814.5 585.9 L815.3 585.9 L816.1 585.9 L816.9 585.9 L817.7 585.9 L818.5 585.9 L819.3 585.9 L820.1 585.9 L820.9 585.9 L821.7 585.9 L822.5 585.9 L823.3 585.9 L824.1 585.9 L824.9 585.9 L825.7 585.9 L826.5 585.9 L827.3 585.9 L828.1 585.9 L828.9 585.9 L829.7 585.9 L830.5 585.9 L831.3 585.9 L832.1 585.9 L832.9 585.9 L833.7 585.9 L834.5 585.9 L835.3 585.9 L836.1 585.9 L836.9 585.9 L837.7 585.9 L838.5 585.9" fill="none" stroke="#403e3a" stroke-width="1.15"/>
<rect x="11.4" y="591.5" width="881" height="1.2" fill="#5a5450"/>
<rect x="891.6" y="472" width="1.1" height="129" fill="#5a5450"/>
<rect x="231.5" y="592" width="0.9" height="9" fill="#5a5450"/>
<rect x="671.5" y="592" width="0.9" height="9" fill="#5a5450"/>
</svg>
<div class="abs" style="left:451.2px;top:434.9px;width:1.5px;height:166px;background:#1e1e1e;"></div>
<div class="abs" style="left:891.6px;top:434px;width:1.1px;height:38px;background:#4a4644;"></div>
<div class="abs scale" style="left:12.2px;top:592.3px;">Scale = 1500.0 um/div</div>
<div class="abs scale" style="left:233.6px;top:592.3px;">Peak = 73.8 %,  B = 2.7 %</div>
<div class="abs scale" style="left:454px;top:592.3px;">Scale = 1500.0 um/div</div>
<div class="abs scale" style="left:674px;top:592.3px;">Peak = 72.1 %,  B = 2.7 %</div>
<div class="abs" style="left:196.6px;top:466.9px;width:97px;height:10.6px;background:rgba(165,212,240,0.2);"></div>
</div>
<!-- STATUS -->
<div id="status">
<div class="abs" style="left:11px;top:600.5px;width:904px;height:1.5px;background:#7c726c;"></div>
<div class="abs" style="left:11px;top:601.9px;width:904px;height:9.6px;background:linear-gradient(#f4f4f6,#e9e9e9 22%,#e9e9e9 78%,#f2f2f4);"></div>
<div class="abs" style="left:11px;top:611.6px;width:904px;height:1.5px;background:#8a8482;"></div>
<div class="abs" style="left:12px;top:603.3px;font-size:7.4px;line-height:8px;color:#333;">Image area</div>
</div>
</body>
</html>
